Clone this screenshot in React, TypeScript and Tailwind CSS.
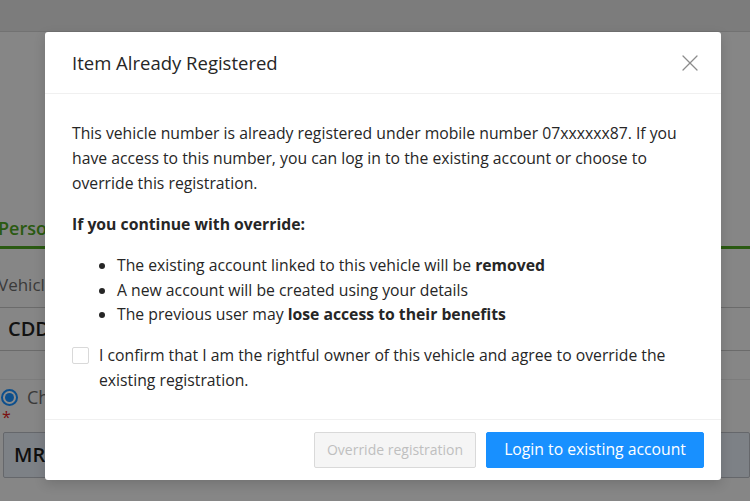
import { X } from "lucide-react";

function BackgroundPage() {
  return (
    <div className="h-full bg-[#f5f5f5]">
      <div className="h-[32px] border-b border-[#cfcfcf] bg-[#e2e2e2]" />
      <div className="-ml-[2px] pt-[182px]">
        <div className="text-[18px] font-semibold leading-[28px] text-[#4ea421]">Personal Details</div>
        <div className="mt-[4px] h-[3px] bg-[#4ea421]" />
        <div className="mt-[24px] text-[17px] leading-[24px] text-[#6b6b6b]">Vehicle Number</div>
        <div className="mt-[10px] flex h-[44px] items-center border-y border-[#c4c4c4] bg-[#f5f5f5] px-[10px]">
          <span className="text-[20px] font-semibold text-[#222]">CDD-4521</span>
        </div>
        <div className="mt-[28px] border-t border-[#e2e2e2]" />
        <div className="mt-[5px] flex items-center gap-[9px] pl-[3px]">
          <span className="flex h-[17px] w-[17px] items-center justify-center rounded-full border-2 border-[#1890ff] bg-white">
            <span className="h-[9px] w-[9px] rounded-full bg-[#1890ff]" />
          </span>
          <span className="text-[18px] leading-[24px] text-[#6b6b6b]">Change owner</span>
        </div>
        <div className="pl-[4px] text-[16px] leading-[16px] text-[#e02020]">*</div>
        <div className="ml-[5px] mt-[7px] flex h-[46px] items-center rounded-[2px] border border-[#b8bcc4] bg-[#e4ebf4] px-[10px]">
          <span className="text-[20px] font-semibold text-[#1c1c1c]">MR</span>
        </div>
      </div>
    </div>
  );
}

export default function App() {
  return (
    <div className="relative h-[501px] w-[750px] overflow-hidden font-['Open_Sans',sans-serif]">
      <BackgroundPage />
      <div className="absolute inset-0 bg-black/45" />
      <div className="absolute left-[45px] top-[32px] w-[676px] rounded-[3px] bg-white text-[#262626] shadow-[0_4px_12px_rgba(0,0,0,0.15)]">
        <div className="flex h-[62px] items-center justify-between border-b border-[#f0f0f0] pl-[27px] pr-[17px]">
          <h2 className="text-[18.5px] font-normal leading-[24px] text-[#262626]">Item Already Registered</h2>
          <X className="h-[28px] w-[28px] text-[#8c8c8c]" strokeWidth={1.1} />
        </div>
        <div className="px-[27px] pb-[26px] pt-[27px] text-[15.75px]">
          <p className="leading-[25px]">
            This vehicle number is already registered under mobile number 07xxxxxx87. If you have access to this number, you can log in to the existing account or choose to override this registration.
          </p>
          <p className="mt-[16px] font-bold leading-[25px]">If you continue with override:</p>
          <ul className="mt-[16px] list-disc pl-[45px] leading-[24.5px]">
            <li>
              The existing account linked to this vehicle will be <strong>removed</strong>
            </li>
            <li>A new account will be created using your details</li>
            <li>
              The previous user may <strong>lose access to their benefits</strong>
            </li>
          </ul>
          <label className="mt-[16px] flex items-start gap-[10px] leading-[25px]">
            <span className="mt-[4px] h-[17px] w-[17px] shrink-0 rounded-[2px] border border-[#d9d9d9] bg-white" />
            <span>
              I confirm that I am the rightful owner of this vehicle and agree to override the existing registration.
            </span>
          </label>
        </div>
        <div className="flex items-center justify-end gap-[10px] border-t border-[#f0f0f0] py-[12px] pr-[17px]">
          <button className="h-[36px] rounded-[2px] border border-[#d9d9d9] bg-[#f5f5f5] px-[12px] text-[14px] text-[#bfbfbf]">
            Override registration
          </button>
          <button className="h-[36px] rounded-[2px] border border-[#1890ff] bg-[#1890ff] px-[17px] text-[15.75px] text-white">
            Login to existing account
          </button>
        </div>
      </div>
    </div>
  );
}
